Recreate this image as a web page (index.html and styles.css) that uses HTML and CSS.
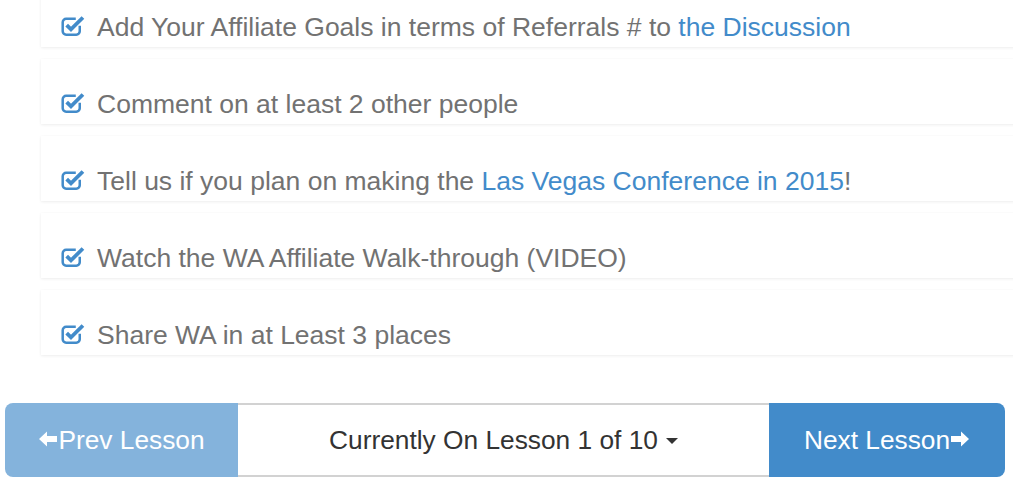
FILE: index.html
```html
<!DOCTYPE html>
<html>
<head>
<meta charset="utf-8">
<link rel="stylesheet" href="styles.css">
</head>
<body>
<div class="tasks">
  <div class="task"><svg class="chk" viewBox="0 0 22 22"><path d="M16.5 12v5a3 3 0 0 1-3 3H4.5a3 3 0 0 1-3-3V9a3 3 0 0 1 3-3H13" fill="none" stroke="#428bca" stroke-width="2.2"/><path d="M5 11.5l3.8 3.8 10.5-10.5" fill="none" stroke="#428bca" stroke-width="3.3"/></svg><span>Add Your Affiliate Goals in terms of Referrals # to <a href="#">the Discussion</a></span></div>
  <div class="task"><svg class="chk" viewBox="0 0 22 22"><path d="M16.5 12v5a3 3 0 0 1-3 3H4.5a3 3 0 0 1-3-3V9a3 3 0 0 1 3-3H13" fill="none" stroke="#428bca" stroke-width="2.2"/><path d="M5 11.5l3.8 3.8 10.5-10.5" fill="none" stroke="#428bca" stroke-width="3.3"/></svg><span>Comment on at least 2 other people</span></div>
  <div class="task"><svg class="chk" viewBox="0 0 22 22"><path d="M16.5 12v5a3 3 0 0 1-3 3H4.5a3 3 0 0 1-3-3V9a3 3 0 0 1 3-3H13" fill="none" stroke="#428bca" stroke-width="2.2"/><path d="M5 11.5l3.8 3.8 10.5-10.5" fill="none" stroke="#428bca" stroke-width="3.3"/></svg><span>Tell us if you plan on making the <a href="#">Las Vegas Conference in 2015</a>!</span></div>
  <div class="task"><svg class="chk" viewBox="0 0 22 22"><path d="M16.5 12v5a3 3 0 0 1-3 3H4.5a3 3 0 0 1-3-3V9a3 3 0 0 1 3-3H13" fill="none" stroke="#428bca" stroke-width="2.2"/><path d="M5 11.5l3.8 3.8 10.5-10.5" fill="none" stroke="#428bca" stroke-width="3.3"/></svg><span>Watch the WA Affiliate Walk-through (VIDEO)</span></div>
  <div class="task"><svg class="chk" viewBox="0 0 22 22"><path d="M16.5 12v5a3 3 0 0 1-3 3H4.5a3 3 0 0 1-3-3V9a3 3 0 0 1 3-3H13" fill="none" stroke="#428bca" stroke-width="2.2"/><path d="M5 11.5l3.8 3.8 10.5-10.5" fill="none" stroke="#428bca" stroke-width="3.3"/></svg><span>Share WA in at Least 3 places</span></div>
</div>
<div class="nav">
  <a class="btn prev" href="#"><svg class="arr" viewBox="0 0 20 20"><path d="M1 10L9 2.5V7H19V13H9V17.5Z" fill="#fff"/></svg>Prev Lesson</a>
  <div class="current">Currently On Lesson 1 of 10 <span class="caret"></span></div>
  <a class="btn next" href="#">Next Lesson<svg class="arr" viewBox="0 0 20 20"><path d="M19 10L11 2.5V7H1V13H11V17.5Z" fill="#fff"/></svg></a>
</div>
</body>
</html>
```
FILE: styles.css
```css
html, body {
  margin: 0;
  padding: 0;
  background: #fff;
  font-family: "Liberation Sans", Arial, sans-serif;
}
.tasks {
  margin-top: -18px;
  margin-left: 41px;
  margin-right: -20px;
  display: flex;
  flex-direction: column;
  gap: 12px;
}
.task {
  height: 65px;
  box-sizing: border-box;
  background: #fff;
  box-shadow: 0 1px 3px rgba(0,0,0,0.07), 0 0 1px rgba(0,0,0,0.03);
  display: flex;
  align-items: flex-end;
  padding: 0 0 6px 20px;
  font-size: 26.5px;
  color: #727272;
  line-height: 28px;
}
.chk {
  width: 25px;
  height: 25px;
  margin-right: 11px;
  margin-bottom: 4px;
  flex: none;
}
.task a {
  color: #428bca;
  text-decoration: none;
}
.nav {
  margin-top: 48px;
  padding: 0 8px 0 5px;
  display: grid;
  grid-template-columns: 233px 1fr 236px;
  height: 74px;
}
.btn {
  display: flex;
  align-items: center;
  justify-content: center;
  color: #fff;
  text-decoration: none;
  font-size: 26.3px;
}
.arr {
  width: 20px;
  height: 20px;
  margin-top: -3px;
}
.prev {
  background: #84b3dc;
  border-radius: 8px 0 0 8px;
}
.next {
  background: #428bca;
  border-radius: 0 8px 8px 0;
}
.current {
  border-top: 2px solid #d2d2d2;
  border-bottom: 2px solid #d2d2d2;
  display: flex;
  align-items: center;
  justify-content: center;
  font-size: 26.3px;
  color: #333;
  gap: 8px;
}
.caret {
  width: 0;
  height: 0;
  border-left: 6px solid transparent;
  border-right: 6px solid transparent;
  border-top: 6px solid #333;
  margin-top: 2px;
}
```
